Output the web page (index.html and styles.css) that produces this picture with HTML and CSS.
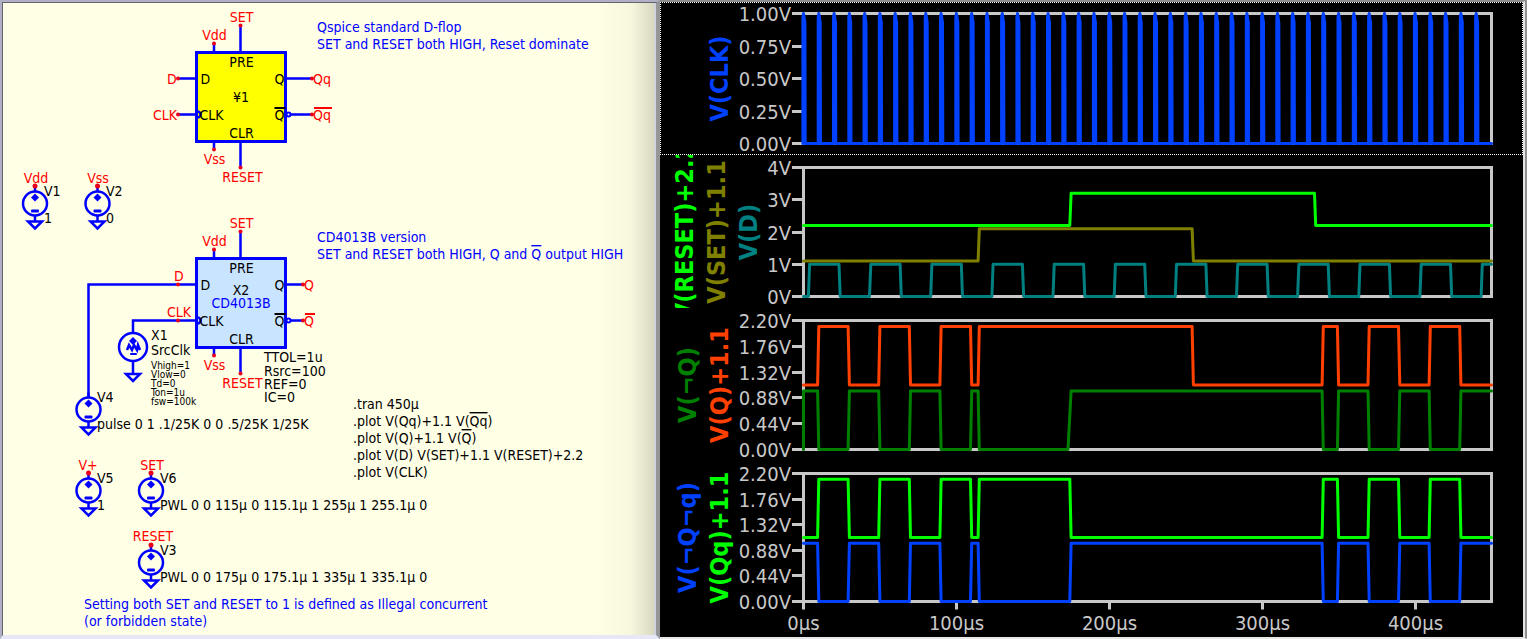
FILE: index.html
```html
<!DOCTYPE html>
<html lang="en">
<head>
    <meta charset="UTF-8">
    <meta name="viewport" content="width=device-width, initial-scale=1.0">
    <title>D-flop SET and RESET</title>
    <link rel="stylesheet" href="styles.css">
</head>
<body>
    <main class="workspace">
        <section class="schematic">
            <svg class="sheet" viewBox="3 3 651 632" width="651" height="632">
                <defs>
                    <g id="source">
                        <path class="wire" d="M0 -17V-12M0 12V18"/>
                        <circle class="outline" r="12"/>
                        <path class="solid" d="M0 -10L4 -6L0 -2L-4 -6Z"/>
                        <rect class="solid" x="-4" y="6" width="8" height="3" rx="1"/>
                        <path class="outline" d="M-7 18H7L0 25Z"/>
                    </g>
                    <g id="flop">
                        <path class="wire" d="M17.5 -9V0M44 -27V0M17.5 89V97M44 89V115"/>
                        <rect class="body" width="89" height="89"/>
                        <path class="outline" d="M1 59A3 3 0 0 1 1 65"/>
                        <circle class="bubble" cx="92" cy="62" r="2"/>
                        <g class="dot">
                            <circle cx="17.5" cy="-9" r="2"/>
                            <circle cx="44" cy="-27" r="2"/>
                            <circle cx="17.5" cy="97" r="2"/>
                            <circle cx="44" cy="115" r="2"/>
                        </g>
                        <g class="text">
                            <text class="mid" x="45" y="14">PRE</text>
                            <text class="mid" x="45" y="85">CLR</text>
                            <text x="4" y="31">D</text>
                            <text x="3" y="67">CLK</text>
                            <text class="end" x="88" y="31">Q</text>
                            <text class="end" x="88" y="67">Q</text>
                            <path class="bar" d="M78 55.5H89"/>
                        </g>
                        <g class="net">
                            <text class="mid" x="18" y="-13">Vdd</text>
                            <text class="mid" x="45" y="-31">SET</text>
                            <text class="mid" x="18" y="111">Vss</text>
                            <text class="mid" x="46" y="129">RESET</text>
                        </g>
                    </g>
                </defs>

                <!-- ¥1 -->
                <path class="wire" d="M178 78.5H196M178 114.5H196M286 78.5H312M291 114.5H312"/>
                <g class="dot">
                    <circle cx="178" cy="78.5" r="2"/>
                    <circle cx="178" cy="114.5" r="2"/>
                    <circle cx="312" cy="78.5" r="2"/>
                    <circle cx="312" cy="114.5" r="2"/>
                </g>
                <use class="yellow" href="#flop" x="196.5" y="52.5"/>
                <text class="mid" x="241" y="102">¥1</text>
                <g class="net">
                    <text x="167" y="84">D</text>
                    <text x="153" y="120">CLK</text>
                    <text x="313" y="84">Qq</text>
                    <text x="313" y="120">Qq</text>
                    <path class="bar" d="M314 108H332"/>
                </g>

                <!-- X2 -->
                <path class="wire" d="M196 284.5H88.5V398M196 320.5H133V333M286 284.5H303M291 320.5H303"/>
                <g class="dot">
                    <circle cx="178" cy="284.5" r="2"/>
                    <circle cx="178" cy="320.5" r="2"/>
                    <circle cx="303" cy="284.5" r="2"/>
                    <circle cx="303" cy="320.5" r="2"/>
                </g>
                <use class="sky" href="#flop" x="196.5" y="258.5"/>
                <text class="mid" x="241" y="295">X2</text>
                <text class="mid note" x="241" y="308">CD4013B</text>
                <g class="net">
                    <text x="174" y="281">D</text>
                    <text x="167" y="317">CLK</text>
                    <text x="304" y="290">Q</text>
                    <text x="304" y="326">Q</text>
                    <path class="bar" d="M305 314H315"/>
                </g>
                <text x="264" y="362">TTOL=1u</text>
                <text x="264" y="376">Rsrc=100</text>
                <text x="264" y="389">REF=0</text>
                <text x="264" y="402">IC=0</text>

                <!-- X1 clock source -->
                <circle class="outline" cx="133" cy="347" r="14"/>
                <path class="solid" d="M133 337L137 341L133 345L129 341Z"/>
                <path class="outline" d="M127 350L129 345L132 350L134 345L137 350L138 345L140 350"/>
                <rect class="solid" x="130" y="353" width="7" height="2" rx="1"/>
                <path class="outline" d="M133 361V374M126 374H140L133 381Z"/>
                <text x="151" y="340">X1</text>
                <text x="151" y="355">SrcClk</text>
                <g class="small">
                    <text x="151" y="369">Vhigh=1</text>
                    <text x="151" y="378">Vlow=0</text>
                    <text x="151" y="387">Td=0</text>
                    <text x="151" y="396">Ton=1u</text>
                    <text x="151" y="405">fsw=100k</text>
                </g>

                <!-- voltage sources -->
                <use href="#source" x="35" y="203.5"/>
                <use href="#source" x="97.5" y="203.5"/>
                <use href="#source" x="88.5" y="409.5"/>
                <use href="#source" x="88.5" y="490.5"/>
                <use href="#source" x="151" y="490.5"/>
                <use href="#source" x="151" y="562.5"/>
                <g class="dot">
                    <circle cx="35" cy="186" r="2.5"/>
                    <circle cx="97.5" cy="186" r="2.5"/>
                    <circle cx="88.5" cy="473" r="2.5"/>
                    <circle cx="151" cy="473" r="2.5"/>
                    <circle cx="151" cy="545" r="2.5"/>
                </g>
                <g class="net">
                    <text class="mid" x="36" y="183">Vdd</text>
                    <text class="mid" x="98" y="183">Vss</text>
                    <text class="mid" x="88" y="470">V+</text>
                    <text class="mid" x="152" y="470">SET</text>
                    <text class="mid" x="153" y="541">RESET</text>
                </g>
                <text x="44" y="196">V1</text>
                <text x="44" y="223">1</text>
                <text x="106" y="196">V2</text>
                <text x="106" y="223">0</text>
                <text x="97" y="402">V4</text>
                <text x="97" y="429">pulse 0 1 .1/25K 0 0 .5/25K 1/25K</text>
                <text x="97" y="483">V5</text>
                <text x="97" y="510">1</text>
                <text x="160" y="483">V6</text>
                <text x="160" y="510">PWL 0 0 115µ 0 115.1µ 1 255µ 1 255.1µ 0</text>
                <text x="160" y="555">V3</text>
                <text x="160" y="582">PWL 0 0 175µ 0 175.1µ 1 335µ 1 335.1µ 0</text>

                <!-- directives -->
                <text x="353" y="409">.tran 450µ</text>
                <text x="353" y="426">.plot V(Qq)+1.1 V(<tspan class="not">Qq</tspan>)</text>
                <text x="353" y="443">.plot V(Q)+1.1 V(<tspan class="not">Q</tspan>)</text>
                <text x="353" y="460">.plot V(D) V(SET)+1.1 V(RESET)+2.2</text>
                <text x="353" y="477">.plot V(CLK)</text>

                <!-- comments -->
                <g class="note">
                    <text x="317" y="32">Qspice standard D-flop</text>
                    <text x="317" y="49">SET and RESET both HIGH, Reset dominate</text>
                    <text x="317" y="242">CD4013B version</text>
                    <text x="317" y="259">SET and RESET both HIGH, Q and <tspan class="not">Q</tspan> output HIGH</text>
                    <text x="84" y="609">Setting both SET and RESET to 1 is defined as Illegal concurrent</text>
                    <text x="84" y="626">(or forbidden state)</text>
                </g>
            </svg>
        </section>

        <section class="waveforms" id="waveforms"></section>
    </main>
    <script src="plots.js"></script>
</body>
</html>
```
FILE: styles.css
```css
body {
    margin: 0;
    background-color: #9c9c9c;
    font-family: "DejaVu Sans Condensed", "Noto Sans", sans-serif;
    overflow: hidden;
}
.workspace {
    display: grid;
    grid-template-columns: minmax(0, 660fr) minmax(0, 867fr);
    min-height: 100vh;
}

/* schematic window */
.schematic {
    overflow: hidden;
    border-top: 3px ridge #b0b0c4;
    border-left: 3px ridge #b0b0c4;
    border-right: 4px solid #949698;
    border-bottom: 4px solid #e6e8f8;
    box-shadow: inset -2px 0 #d0d4dc;
    background: linear-gradient(to right, #ffffe6 calc(100% - 60px), #f7f7de calc(100% - 25px), #d6d6c0) #ffffe6;
}
.sheet {
    display: block;
}
.sheet text {
    font-size: 14px;
    fill: #000;
}
.sheet .net text {
    fill: #f00;
}
.sheet .note text,
.sheet text.note {
    fill: #00f;
}
.sheet .small text {
    font-size: 10px;
}
.mid {
    text-anchor: middle;
}
.end {
    text-anchor: end;
}
.not {
    text-decoration: overline 2px;
}
.wire,
.outline {
    fill: none;
    stroke: #00f;
    stroke-width: 2.5px;
}
.solid {
    fill: #00f;
}
.body {
    stroke: #00f;
    stroke-width: 3px;
}
.yellow {
    fill: #ff0;
}
.sky {
    fill: #c8e4ff;
}
.bubble {
    fill: #fff;
    stroke: #00f;
    stroke-width: 2px;
}
.dot {
    fill: #e8001c;
}
.bar {
    stroke: #000;
    stroke-width: 2px;
}
.net .bar {
    stroke: #f00;
}

/* waveform window */
.waveforms {
    border-top: 2px solid #8e8e8e;
    border-right: 4px ridge #e4e4e4;
    border-bottom: 2px solid #e8e8e8;
    background-color: #000;
}
.pane {
    display: block;
    width: 100%;
    height: auto;
    overflow: hidden;
}
.pane.active {
    outline: 1px dotted #fff;
    outline-offset: -1px;
}
.frame,
.tick {
    fill: none;
    stroke: #c8c8c8;
    stroke-width: 3px;
}
.trace {
    fill: none;
    stroke-width: 3px;
    stroke-linejoin: round;
    stroke-linecap: round;
}
.scale {
    font-size: 20px;
    fill: #c8c8c8;
}
.signal {
    font-size: 25px;
    font-weight: bold;
    text-anchor: middle;
}
```
FILE: plots.js
```js
const LEFT = 143.5, RIGHT = 831.5, END = 450;

// square wave as [time, value] points, toggling at each edge
function toggle(low, high, edges, startHigh) {
    let on = !!startHigh;
    const points = [[0, on ? high : low]];
    edges.forEach(t => {
        points.push([t - 0.8, on ? high : low]);
        on = !on;
        points.push([t, on ? high : low]);
    });
    points.push([END, on ? high : low]);
    return points;
}

function clock() {
    const points = [];
    for (let t = 0; t < END; t += 10) {
        points.push([t - 0.4, 0], [t - 0.4, 0.97], [t, 1], [t + 0.9, 0.93], [t + 1.1, 0]);
    }
    points.push([END, 0]);
    return points;
}

const dEdges = [];
for (let t = 4; t < END; t += 20) dEdges.push(t);

const common = [10, 30, 50, 70, 90, 110, 115];
const tail = [340, 350, 370, 390, 410, 430];

const notQ = toggle(0, 1, common.concat([175], tail), true);
notQ.unshift([0, 0]);
// the CD4013B releases its inverted output a little more slowly
notQ.find(p => p[0] === 174.2)[0] = 173;

const panes = [
    {
        height: 153, top: 11.5, bottom: 141.5, max: 1, active: true,
        scale: ['1.00V', '0.75V', '0.50V', '0.25V', '0.00V'],
        traces: [{ name: 'V(CLK)', color: '#0040ff', x: 68, points: clock() }]
    },
    {
        height: 153, top: 12.5, bottom: 141.5, max: 4,
        scale: ['4V', '3V', '2V', '1V', '0V'],
        traces: [
            { name: 'V(D)', color: '#008080', x: 97, points: toggle(0, 1, dEdges) },
            { name: 'V(SET)+1.1', color: '#808000', x: 65, points: toggle(1.1, 2.1, [115, 255]) },
            { name: 'V(RESET)+2.2', color: '#00ff00', x: 33, points: toggle(2.2, 3.2, [175, 335]) }
        ]
    },
    {
        height: 153, top: 12.5, bottom: 141.5, max: 2.2,
        scale: ['2.20V', '1.76V', '1.32V', '0.88V', '0.44V', '0.00V'],
        traces: [
            { name: 'V(Q)+1.1', color: '#ff4000', x: 68, points: toggle(1.1, 2.1, common.concat([255], tail)) },
            { name: 'V(¬Q)', color: '#008000', x: 36, points: notQ }
        ]
    },
    {
        height: 176, top: 12.5, bottom: 140.5, max: 2.2, time: true,
        scale: ['2.20V', '1.76V', '1.32V', '0.88V', '0.44V', '0.00V'],
        traces: [
            { name: 'V(Qq)+1.1', color: '#00ff00', x: 68, points: toggle(1.1, 2.1, common.concat([175], tail)) },
            { name: 'V(¬Q¬q)', color: '#0040ff', x: 36, points: toggle(0, 1, common.concat([175], tail), true) }
        ]
    }
];

function timeX(t) {
    return LEFT + t / END * (RIGHT - LEFT);
}

function drawPane(pane) {
    const size = pane.bottom - pane.top;
    const middle = (pane.top + pane.bottom) / 2;
    let svg = `<svg class="pane${pane.active ? ' active' : ''}" viewBox="0 0 863 ${pane.height}">`;
    svg += `<rect class="frame" x="${LEFT}" y="${pane.top}" width="${RIGHT - LEFT}" height="${size}"/>`;

    pane.scale.forEach((label, i) => {
        const y = Math.floor(pane.top + size * i / (pane.scale.length - 1)) + 0.5;
        svg += `<path class="tick" d="M132 ${y}H${LEFT}"/>`;
        svg += `<text class="scale end" x="131" y="${y + 7}">${label}</text>`;
    });

    if (pane.time) {
        for (let t = 0; t < END; t += 100) {
            const x = Math.floor(timeX(t)) + 0.5;
            svg += `<path class="tick" d="M${x} ${pane.bottom}v8"/>`;
            svg += `<text class="scale mid" x="${x}" y="${pane.bottom + 28}">${t}µs</text>`;
        }
    }

    pane.traces.forEach(trace => {
        const line = trace.points.map(p => `${timeX(p[0]).toFixed(1)},${(pane.bottom - p[1] / pane.max * size).toFixed(1)}`);
        svg += `<polyline class="trace" stroke="${trace.color}" points="${line.join(' ')}"/>`;
        svg += `<text class="signal" fill="${trace.color}" transform="translate(${trace.x} ${middle}) rotate(-90)">${trace.name}</text>`;
    });
    return svg + '</svg>';
}

document.getElementById('waveforms').innerHTML = panes.map(drawPane).join('');
```
